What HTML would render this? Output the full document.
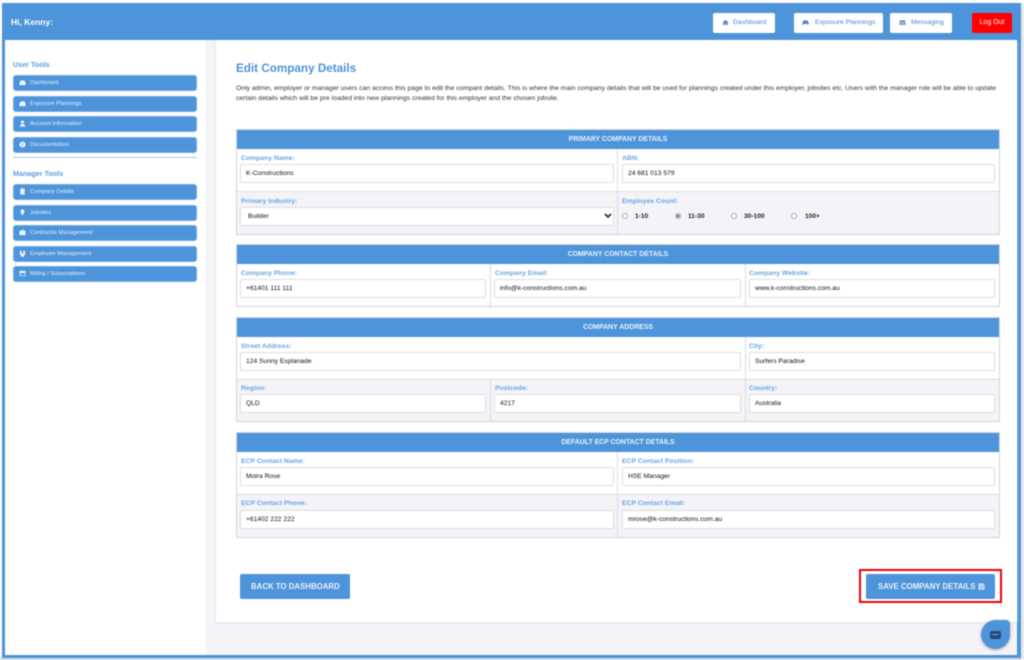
<!DOCTYPE html>
<html><head><meta charset="utf-8"><style>
*{box-sizing:border-box}
html,body{margin:0;padding:0;width:1024px;height:660px;overflow:hidden;background:#fff;font-family:"Liberation Sans",sans-serif}
.a{position:absolute}
#wrap{position:absolute;left:0;top:0;width:1024px;height:660px;overflow:hidden;filter:blur(.45px)}
.t{position:absolute;white-space:nowrap}
.side{position:absolute;left:13px;width:184px;background:#4d94da;border-radius:3px;color:#e8f1fb;font-size:5.8px;line-height:15px;padding-left:16px;border:1px solid #74aae2}
.side svg{position:absolute;left:5px;top:3px;width:7px;height:7px;fill:#eef5fc}
.top{position:absolute;top:13px;height:20px;background:#fff;border-radius:2px;color:#4d86c9;font-size:6.8px;line-height:20px;white-space:nowrap}
.top svg{position:absolute;top:6px;width:7px;height:7px;fill:#4d86c9}
.sec{position:absolute;left:236px;width:764px;border:1px solid #d5d5da;background:#fff}
.hd{position:absolute;left:0;top:0;right:0;height:19px;background:#4d94da;color:#eaf2fb;font-size:6.9px;font-weight:bold;text-align:center;line-height:20px}
.g{background:#f3f3f8}
.v{position:absolute;width:1px;background:#dcdce0}
.l{position:absolute;color:#6aa6e2;font-size:6.8px;font-weight:bold;white-space:nowrap;line-height:8px;margin-top:1px}
.i{position:absolute;height:19px;background:#fff;border:1px solid #dedee2;border-radius:2px;color:#111;font-size:6.7px;line-height:18px;padding-left:5px;white-space:nowrap}
.r{position:absolute;width:6px;height:6px;border:1px solid #aaa;border-radius:50%;background:#fff}
.rl{position:absolute;font-size:6.6px;font-weight:bold;color:#222;white-space:nowrap;line-height:8px;margin-top:.5px}
.btn{position:absolute;background:#4d94da;color:#eaf2fb;border-radius:2px;font-weight:bold;font-size:7.85px;white-space:nowrap}
</style></head><body>
<div id="wrap">
<div class="a" style="left:2px;top:3px;width:1019px;height:655px;background:#4d94da"></div>
<div class="a" style="left:5px;top:40px;width:1012px;height:615px;background:#f3f3f8"></div>
<div class="a" style="left:5px;top:40px;width:201px;height:615px;background:#fff"></div>
<div class="a" style="left:216px;top:40px;width:801px;height:582px;background:#fff;box-shadow:0 1px 2px #ddd"></div>
<div class="a" style="left:0;top:658px;width:1024px;height:2px;background:#d8d8d8"></div>
<div class="a" style="left:1021px;top:3px;width:3px;height:657px;background:#e8e8e8"></div>

<div class="t" style="left:11px;top:16px;color:#fff;font-size:8.5px;font-weight:bold;line-height:12px">Hi, Kenny:</div>

<div class="top" style="left:713px;width:62px;padding-left:20px"><svg style="left:9px" viewBox="0 0 16 16"><path d="M8 2L1 8h2v6h4v-4h2v4h4V8h2z"/></svg>Dashboard</div>
<div class="top" style="left:794px;width:89px;padding-left:21px"><svg style="left:8px" viewBox="0 0 16 16"><path d="M1 7l3-4h8l3 4v6h-3v-2H4v2H1z"/></svg>Exposure Plannings</div>
<div class="top" style="left:890px;width:62px;padding-left:21px"><svg style="left:9px" viewBox="0 0 16 16"><path d="M1 3h14v2L8 9 1 5zM1 7l7 4 7-4v6H1z"/></svg>Messaging</div>
<div class="top" style="left:972px;width:40px;background:#f00;color:#fff;text-align:center;border-radius:2px;font-size:7px">Log Out</div>

<div class="t" style="left:13px;top:60px;color:#5c9ede;font-size:7.2px;font-weight:bold;line-height:9px">User Tools</div>
<div class="side" style="top:75px;height:16px"><svg viewBox="0 0 16 16"><path d="M1 8l3-5h8l3 5v6H1z"/></svg>Dashboard</div>
<div class="side" style="top:96px;height:16px"><svg viewBox="0 0 16 16"><path d="M1 8l3-5h8l3 5v6H1z"/></svg>Exposure Plannings</div>
<div class="side" style="top:116px;height:16px"><svg viewBox="0 0 16 16"><circle cx="8" cy="4.5" r="3.5"/><path d="M2 15c0-5 3-6 6-6s6 1 6 6z"/></svg>Account Information</div>
<div class="side" style="top:137px;height:16px"><svg viewBox="0 0 16 16"><path fill-rule="evenodd" d="M8 1a7 7 0 110 14A7 7 0 018 1zM7 4v2h2V4zM7 7v5h2V7z"/></svg>Documentation</div>
<div class="a" style="left:13px;top:157px;width:184px;height:1px;background:#a8ccf0"></div>
<div class="t" style="left:13px;top:169px;color:#5c9ede;font-size:7.2px;font-weight:bold;line-height:9px">Manager Tools</div>
<div class="side" style="top:184px;height:16px"><svg viewBox="0 0 16 16"><path d="M3 1h10v14H3z"/></svg>Company Details</div>
<div class="side" style="top:205px;height:16px"><svg viewBox="0 0 16 16"><path d="M8 1a4.500 4.500 0 014.500 4.500C12.500 9 8 15 8 15S3.500 9 3.500 5.500A4.500 4.500 0 018 1z"/></svg>Jobsites</div>
<div class="side" style="top:225px;height:16px"><svg viewBox="0 0 16 16"><path d="M5 4V2h6v2h4v10H1V4z"/></svg>Contractor Management</div>
<div class="side" style="top:246px;height:16px"><svg viewBox="0 0 16 16"><circle cx="4" cy="4" r="2.500"/><circle cx="12" cy="4" r="2.500"/><path d="M1 7h14v3h-3v5H4v-5H1z"/></svg>Employee Management</div>
<div class="side" style="top:266px;height:16px"><svg viewBox="0 0 16 16"><path fill-rule="evenodd" d="M1 2h14v12H1zM2.500 7v5.500h11V7z"/></svg>Billing / Subscriptions</div>

<div class="t" style="left:236px;top:60px;color:#4d94da;font-size:11.7px;font-weight:bold;line-height:17px">Edit Company Details</div>
<div class="t" style="left:236px;top:84px;color:#333;font-size:6.8px;line-height:10px">Only admin, employer or manager users can access this page to edit the compant details. This is where the main company details that will be used for plannings created under this employer, jobsites etc. Users with the manager role will be able to update<br>certain details which will be pre loaded into new plannings created for this employer and the chosen jobsite.</div>

<div class="sec" style="top:129px;height:106px"><div class="hd">PRIMARY COMPANY DETAILS</div></div>
<div class="a g" style="left:237px;top:192px;width:762px;height:42px"></div>
<div class="a" style="left:237px;top:191px;width:762px;height:1px;background:#dcdce0"></div>
<div class="v" style="left:617px;top:149px;height:85px"></div>
<div class="l" style="left:241px;top:154px">Company Name:</div>
<div class="i" style="left:240px;top:164px;width:374px">K-Constructions</div>
<div class="l" style="left:622px;top:154px">ABN:</div>
<div class="i" style="left:622px;top:164px;width:373px">24 681 013 579</div>
<div class="l" style="left:241px;top:197px">Primary Industry:</div>
<div class="i" style="left:240px;top:207px;width:374px;padding-left:7px">Builder<svg class="a" style="right:1px;top:5px;width:8px;height:6px" viewBox="0 0 8 6"><path d="M1 1l3 3 3-3" fill="none" stroke="#222" stroke-width="1.600"/></svg></div>
<div class="l" style="left:622px;top:197px">Employee Count:</div>
<div class="r" style="left:622px;top:213px"></div><div class="rl" style="left:635px;top:212px">1-10</div>
<div class="r" style="left:675px;top:213px;background:#777;box-shadow:inset 0 0 0 .5px #fff"></div><div class="rl" style="left:688px;top:212px">11-30</div>
<div class="r" style="left:731px;top:213px"></div><div class="rl" style="left:744px;top:212px">30-100</div>
<div class="r" style="left:791px;top:213px"></div><div class="rl" style="left:805px;top:212px">100+</div>

<div class="sec" style="top:244px;height:63px"><div class="hd">COMPANY CONTACT DETAILS</div></div>
<div class="v" style="left:490px;top:264px;height:42px"></div>
<div class="v" style="left:745px;top:264px;height:42px"></div>
<div class="l" style="left:241px;top:269px">Company Phone:</div>
<div class="i" style="left:240px;top:279px;width:246px">+61401 111 111</div>
<div class="l" style="left:495px;top:269px">Company Email:</div>
<div class="i" style="left:494px;top:279px;width:247px">info@k-constructions.com.au</div>
<div class="l" style="left:749px;top:269px">Company Website:</div>
<div class="i" style="left:749px;top:279px;width:246px">www.k-constructions.com.au</div>

<div class="sec" style="top:317px;height:105px"><div class="hd">COMPANY ADDRESS</div></div>
<div class="a g" style="left:237px;top:380px;width:762px;height:41px"></div>
<div class="a" style="left:237px;top:379px;width:762px;height:1px;background:#dcdce0"></div>
<div class="v" style="left:745px;top:337px;height:84px"></div>
<div class="v" style="left:490px;top:380px;height:41px"></div>
<div class="l" style="left:241px;top:342px">Street Address:</div>
<div class="i" style="left:240px;top:352px;width:501px">124 Sunny Esplanade</div>
<div class="l" style="left:749px;top:342px">City:</div>
<div class="i" style="left:749px;top:352px;width:246px">Surfers Paradise</div>
<div class="l" style="left:241px;top:384px">Region:</div>
<div class="i" style="left:240px;top:394px;width:246px">QLD</div>
<div class="l" style="left:495px;top:384px">Postcode:</div>
<div class="i" style="left:494px;top:394px;width:247px">4217</div>
<div class="l" style="left:749px;top:384px">Country:</div>
<div class="i" style="left:749px;top:394px;width:246px">Australia</div>

<div class="sec" style="top:432px;height:106px"><div class="hd">DEFAULT ECP CONTACT DETAILS</div></div>
<div class="a g" style="left:237px;top:495px;width:762px;height:42px"></div>
<div class="a" style="left:237px;top:494px;width:762px;height:1px;background:#dcdce0"></div>
<div class="v" style="left:617px;top:452px;height:85px"></div>
<div class="l" style="left:241px;top:457px">ECP Contact Name:</div>
<div class="i" style="left:240px;top:467px;width:374px">Moira Rose</div>
<div class="l" style="left:622px;top:457px">ECP Contact Position:</div>
<div class="i" style="left:622px;top:467px;width:373px">HSE Manager</div>
<div class="l" style="left:241px;top:499px">ECP Contact Phone:</div>
<div class="i" style="left:240px;top:510px;width:374px">+61402 222 222</div>
<div class="l" style="left:622px;top:499px">ECP Contact Email:</div>
<div class="i" style="left:622px;top:510px;width:373px">mrose@k-constructions.com.au</div>

<div class="btn" style="left:240px;top:574px;width:110px;height:25px;line-height:25px;padding-left:11px">BACK TO DASHBOARD</div>
<div class="a" style="left:859px;top:569px;width:143px;height:34px;border:2px solid #e8000d"></div>
<div class="btn" style="left:866px;top:574px;width:129px;height:25px;line-height:25px;padding-left:12px">SAVE COMPANY DETAILS<svg class="a" style="left:112px;top:8.500px;width:7px;height:7px" viewBox="0 0 16 16"><path fill="none" stroke="#eaf2fb" stroke-width="2" d="M2 2h9l3 3v9H2zM5 2v4h5V2M5 14V9h6v5"/></svg></div>

<div class="a" style="left:981px;top:620px;width:29px;height:29px;background:#4d94da;border-radius:50% 4px 50% 50%;box-shadow:0 1px 3px rgba(0,0,0,.3)"></div>
<div class="a" style="left:990px;top:631px;width:11px;height:8px;background:#274a78;border-radius:2px"></div>
<div class="a" style="left:992px;top:634px;width:7px;height:1px;background:#6ea6df"></div>
</div>
</body></html>
